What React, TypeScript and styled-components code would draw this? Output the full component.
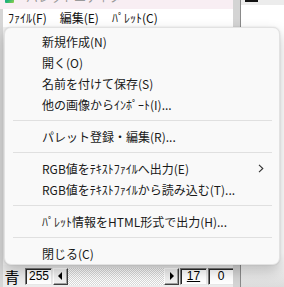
import React from "react";
import styled, { createGlobalStyle } from "styled-components";

const GlobalStyle = createGlobalStyle`
  html, body { margin: 0; padding: 0; }
  body {
    background: #ffffff;
    font-family: "Noto Sans CJK JP", "Noto Sans", sans-serif;
  }
`;

const Screen = styled.div`
  position: relative;
  width: 284px;
  height: 287px;
  overflow: hidden;
  display: grid;
  grid-template-columns: 233px 8px 43px;
  background: #ffffff;
`;

const MainWindow = styled.div`
  display: grid;
  grid-template-rows: 9px 1fr;
  min-height: 0;
`;

const TitleBar = styled.div`
  background: #f8eef3;
  display: flex;
  align-items: flex-start;
  gap: 12px;
  padding-left: 5px;
  overflow: hidden;
`;

const AppIcon = styled.div`
  width: 9px;
  height: 12px;
  margin-top: -9px;
  background: linear-gradient(135deg, #2f7bd8, #22b573 60%, #9bd14a);
  border-radius: 1px;
`;

const TitleText = styled.span`
  font-size: 12px;
  line-height: 12px;
  margin-top: -9px;
  color: #9a9a9a;
  white-space: nowrap;
`;

const Body = styled.div`
  display: grid;
  grid-template-rows: 18px 1fr 22px;
  border-left: 3px solid #d6d6d6;
  min-height: 0;
`;

const MenuBar = styled.div`
  display: flex;
  align-items: center;
  gap: 13px;
  padding-left: 5px;
  background: #ffffff;
  font-size: 12px;
  color: #111;
  white-space: nowrap;
`;

const MenuBarItem = styled.span`
  line-height: 18px;
`;

const Content = styled.div`
  background: #f0f0f0;
`;

const StatusBar = styled.div`
  display: flex;
  align-items: center;
  background: #ececec;
  font-family: "Liberation Sans", Arial, sans-serif;
  font-size: 12px;
  color: #000;
`;

const ChannelLabel = styled.span`
  width: 18px;
  text-align: center;
  font-family: "Noto Sans CJK JP", sans-serif;
  font-size: 15px;
  line-height: 17px;
  margin-right: 4px;
`;

const ValueBox = styled.div<{ $w: number; $center?: boolean }>`
  box-sizing: border-box;
  width: ${(p) => p.$w}px;
  height: 17px;
  background: #ffffff;
  border: 1px solid;
  border-color: #7a7a7a #e8e8e8 #e8e8e8 #7a7a7a;
  box-shadow: inset 1px 1px 0 #2a2a2a;
  display: flex;
  align-items: center;
  justify-content: ${(p) => (p.$center ? "center" : "flex-start")};
  padding-left: ${(p) => (p.$center ? 0 : 3)}px;
  line-height: 15px;
`;

const Underlined = styled.span`
  text-decoration: underline;
`;

const ArrowButton = styled.div`
  box-sizing: border-box;
  width: 15px;
  height: 17px;
  background: #f0f0f0;
  border: 1px solid;
  border-color: #ffffff #404040 #404040 #ffffff;
  box-shadow: inset -1px -1px 0 #a0a0a0;
  display: flex;
  align-items: center;
  justify-content: center;
`;

const Track = styled.div`
  width: 96px;
  height: 17px;
  background-color: #ffffff;
  background-image: repeating-conic-gradient(#d8d8d8 0% 25%, #ffffff 0% 50%);
  background-size: 2px 2px;
`;

const Splitter = styled.div`
  background: #d4d4d4;
  border-right: 1px solid #8a8a8a;
  box-sizing: border-box;
`;

const RightPane = styled.div`
  display: grid;
  grid-template-rows: 5px 1fr;
  background: linear-gradient(to bottom, #ffffff 88%, #dcdcdc);
`;

const RightHeader = styled.div`
  background: #ececec;
  display: flex;
  align-items: flex-start;
  padding-left: 4px;
`;

const RightHeaderMark = styled.div`
  width: 13px;
  height: 2px;
  background: #111;
`;

const Popup = styled.div`
  position: absolute;
  left: 4px;
  top: 27px;
  width: 276px;
  box-sizing: border-box;
  padding: 3px 0 0;
  background: #f9f9f9;
  border: 1px solid #e2e2e2;
  border-radius: 7px;
  box-shadow: 0 6px 14px rgba(0, 0, 0, 0.22), 0 0 2px rgba(0, 0, 0, 0.12);
  font-size: 12px;
  color: #1a1a1a;
`;

const Item = styled.div`
  height: 21px;
  display: flex;
  align-items: center;
  justify-content: space-between;
  padding: 0 15px 0 37px;
  white-space: nowrap;
`;

const Separator = styled.div`
  height: 11px;
  display: flex;
  align-items: center;
  margin: 0 7px 0 8px;
  &::after {
    content: "";
    flex: 1;
    height: 1px;
    background: #e0e0e0;
  }
`;

const Chevron = () => (
  <svg width="6" height="9" viewBox="0 0 6 9">
    <polyline points="1,0.8 4.8,4.5 1,8.2" fill="none" stroke="#333" strokeWidth="1.1" />
  </svg>
);

const LeftTri = () => (
  <svg width="5" height="8" viewBox="0 0 5 8">
    <polygon points="4,0 0,4 4,8" fill="#000" />
  </svg>
);

const RightTri = () => (
  <svg width="5" height="8" viewBox="0 0 5 8">
    <polygon points="1,0 5,4 1,8" fill="#000" />
  </svg>
);

type Entry = { label?: string; sub?: boolean; sep?: boolean };

const entries: Entry[] = [
  { label: "新規作成(N)" },
  { label: "開く(O)" },
  { label: "名前を付けて保存(S)" },
  { label: "他の画像からｲﾝﾎﾟｰﾄ(I)..." },
  { sep: true },
  { label: "パレット登録・編集(R)..." },
  { sep: true },
  { label: "RGB値をﾃｷｽﾄﾌｧｲﾙへ出力(E)", sub: true },
  { label: "RGB値をﾃｷｽﾄﾌｧｲﾙから読み込む(T)..." },
  { sep: true },
  { label: "ﾊﾟﾚｯﾄ情報をHTML形式で出力(H)..." },
  { sep: true },
  { label: "閉じる(C)" },
];

export default function App() {
  return (
    <>
      <GlobalStyle />
      <Screen>
        <MainWindow>
          <TitleBar>
            <AppIcon />
            <TitleText>パレットエディタ</TitleText>
          </TitleBar>
          <Body>
            <MenuBar>
              <MenuBarItem>ﾌｧｲﾙ(F)</MenuBarItem>
              <MenuBarItem>編集(E)</MenuBarItem>
              <MenuBarItem>ﾊﾟﾚｯﾄ(C)</MenuBarItem>
            </MenuBar>
            <Content />
            <StatusBar>
              <ChannelLabel>青</ChannelLabel>
              <ValueBox $w={27}>255</ValueBox>
              <ArrowButton style={{ marginLeft: 1 }}>
                <LeftTri />
              </ArrowButton>
              <Track />
              <ArrowButton>
                <RightTri />
              </ArrowButton>
              <ValueBox $w={27} $center style={{ marginLeft: 1 }}>
                <Underlined>17</Underlined>
              </ValueBox>
              <ValueBox $w={26} $center style={{ marginLeft: 1 }}>
                0
              </ValueBox>
            </StatusBar>
          </Body>
        </MainWindow>
        <Splitter />
        <RightPane>
          <RightHeader>
            <RightHeaderMark />
          </RightHeader>
          <div />
        </RightPane>
        <Popup>
          {entries.map((e, i) =>
            e.sep ? (
              <Separator key={i} />
            ) : (
              <Item key={i}>
                <span>{e.label}</span>
                {e.sub && <Chevron />}
              </Item>
            )
          )}
        </Popup>
      </Screen>
    </>
  );
}
